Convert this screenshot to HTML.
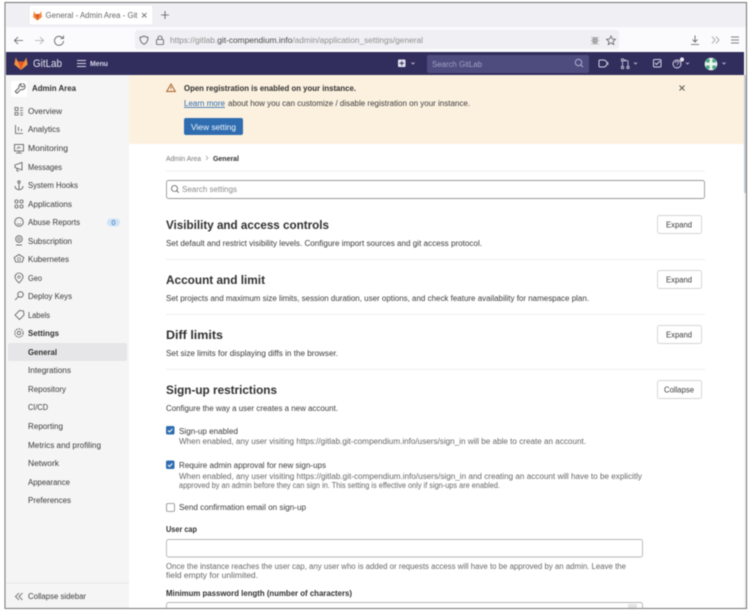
<!DOCTYPE html>
<html><head><meta charset="utf-8"><style>
html,body{margin:0;padding:0;background:#fff;width:755px;height:614px;overflow:hidden}
svg{display:block;filter:blur(.55px)}
text{font-family:"Liberation Sans",sans-serif;font-size:8px;fill:#404040}
.s{fill:#3a3a3a}
.g{fill:#666}
.b{font-weight:bold;fill:#303030}
.h{font-weight:bold;font-size:12px;fill:#303030}
.i{fill:none;stroke:#5c5c5c;stroke-width:.85}
.w{fill:none;stroke:#d5d4e6;stroke-width:1}
</style></head><body>
<svg width="755" height="614" viewBox="0 0 755 614" xmlns="http://www.w3.org/2000/svg">
<rect width="755" height="614" fill="#fff"/>
<!-- browser chrome -->
<rect x="6" y="3" width="740" height="24" fill="#f0f0f4"/>
<rect x="29" y="5" width="124" height="20" rx="2" fill="#fff" stroke="#e2e2e6" stroke-width=".6"/>
<path d="M37.500 20.500L33 17L34 11L35.400 14H39.600L41 11L42 17Z" fill="#ee8a3c"/><path d="M37.500 20.500L35.400 14H39.600Z" fill="#e2552a"/>
<text x="45.500" y="18" textLength="92" lengthAdjust="spacingAndGlyphs" class="g">General - Admin Area - Git</text>
<path d="M142 13l4.500 4.500M146.500 13L142 17.500" class="i"/>
<path d="M165 11v8M161 15h8" class="i"/>
<rect x="6" y="27" width="740" height="25" fill="#fbfbfd"/>
<rect x="135" y="30" width="484" height="19" rx="3" fill="#f0f0f4"/>
<path d="M23 40.500H14.500M18 37l-3.500 3.500 3.500 3.500" class="i"/>
<path d="M35 40.500h8.500M40 37l3.500 3.500-3.500 3.500" class="i" style="stroke:#aaa"/>
<path d="M62.500 38a4.500 4.500 0 1 0 1 3M63.500 35.500V38.500H60.500" class="i"/>
<path d="M144 36c1.500 1 3 1.300 4 1.300 0 3.500-1 5.700-4 7-3-1.300-4-3.500-4-7 1 0 2.500-.3 4-1.300z" class="i"/>
<rect x="156.500" y="39.500" width="7" height="5" rx=".8" class="i"/><path d="M158 39.500v-1.500a2 2 0 0 1 4 0v1.500" class="i"/>
<text x="170" y="43" textLength="253" lengthAdjust="spacingAndGlyphs" style="fill:#8f8f8f">https://gitlab.<tspan style="fill:#4a4a4a">git-compendium.info</tspan>/admin/application_settings/general</text>
<ellipse cx="595" cy="40.500" rx="3" ry="3.500" fill="#a4a4a4"/><path d="M591 37.500l8 0M590.500 40.500h9M591 44l8 0" stroke="#b4b4b4" stroke-width=".7"/>
<path d="M611 36l1.300 2.900 3.100.4-2.300 2.100.6 3.100-2.700-1.600-2.700 1.600.6-3.100-2.300-2.100 3.100-.4z" class="i" style="stroke:#666"/>
<path d="M695 35.500v6M692.500 39.500l2.500 2.500 2.500-2.500M691 44.500h8" class="i"/>
<path d="M712 36.500l3 3.500-3 3.500M716 36.500l3 3.500-3 3.500" class="i" style="stroke:#999"/>
<path d="M731 37h8M731 40h8M731 43h8" class="i"/>
<!-- nav -->
<rect x="6" y="52" width="738" height="23" fill="#312e5d"/>
<path d="M21 70L14.300 64.500L15.700 57.500L17.700 61.500H24.300L26.300 57.500L27.700 64.500Z" fill="#f0933f"/><path d="M21 70L17.700 61.500H24.300Z" fill="#e5572b"/>
<text x="33" y="67" textLength="29" lengthAdjust="spacingAndGlyphs" style="font-size:11px;fill:#e6e5f0">GitLab</text>
<path d="M77 60.500h9M77 63.500h9M77 66.500h9" class="w"/>
<text x="90" y="66" textLength="18" lengthAdjust="spacingAndGlyphs" style="font-size:7px;font-weight:bold;fill:#d8d7e8">Menu</text>
<rect x="398" y="59.500" width="7.500" height="7.500" rx="1" fill="#e4e3f0"/><path d="M401.800 61v4.500M399.500 63.300h4.500" stroke="#312e5d"/>
<path d="M411.500 62.500l1.500 1.500 1.500-1.500" class="w" style="stroke-width:.8"/>
<rect x="427" y="55" width="162" height="18" rx="2" fill="#4e4b7e"/>
<text x="432" y="67" textLength="50" lengthAdjust="spacingAndGlyphs" style="fill:#a3a1c4">Search GitLab</text>
<circle cx="578.500" cy="62.500" r="3.200" fill="none" stroke="#b0aecd"/><path d="M581 65l2 2" stroke="#b0aecd"/>
<path d="M600 60h3.500a3.500 3.500 0 0 1 0 7H600a1 1 0 0 1-1-1v-5a1 1 0 0 1 1-1z" class="w"/><path d="M608 62v3" class="w" style="stroke-width:.7"/>
<circle cx="622.500" cy="60" r="1.200" class="w" style="stroke-width:.8"/><circle cx="622.500" cy="67.500" r="1.200" class="w" style="stroke-width:.8"/><path d="M622.500 61.200v5M625.500 59.500l-1 1 1 1M624.500 60.500H627a1 1 0 0 1 1 1v5" class="w" style="stroke-width:.8"/><circle cx="628" cy="67.500" r="1.200" class="w" style="stroke-width:.8"/>
<path d="M634 62.500l1.500 1.500 1.500-1.500" class="w" style="stroke-width:.8"/>
<rect x="653.500" y="59.500" width="7.500" height="7.500" rx="1" class="w"/><path d="M655 63l1.500 1.500 3.500-3.500" class="w"/>
<circle cx="677" cy="64" r="4" class="w"/><path d="M675.500 63c0-2 3-2 3 0 0 1-1.500 1-1.500 2M677 66.300v.5" class="w" style="stroke-width:.7"/>
<circle cx="682" cy="59.500" r="2.100" fill="#e8e8f4"/><path d="M686 62.500l1.500 1.500 1.500-1.500" class="w" style="stroke-width:.8"/>
<circle cx="711" cy="64" r="6.300" fill="#e6f2e6"/><circle cx="707.800" cy="60.800" r="2" fill="#4fa888"/><circle cx="714.200" cy="60.800" r="2" fill="#4fa888"/><circle cx="707.800" cy="67.200" r="2" fill="#4fa888"/><circle cx="714.200" cy="67.200" r="2" fill="#4fa888"/><path d="M711 58v12M705 64h12" stroke="#eef6ee" stroke-width="1.500"/>
<path d="M722.500 62.500l1.500 1.500 1.500-1.500" class="w" style="stroke-width:.8"/>
<!-- sidebar -->
<rect x="6" y="75" width="123" height="533" fill="#f5f5f5"/>
<rect x="11" y="81" width="16" height="16" rx="2" fill="#fff"/>
<path d="M22.500 83.500a3.200 3.200 0 0 1 2.500 4 3.200 3.200 0 0 1-4.200 2L17 93.300l-1.800-1.800 3.800-3.800a3.200 3.200 0 0 1 2-4l-.2 2.300 1.500 1 1.700-1" class="i" style="stroke:#444"/>
<text x="32" y="91" textLength="44" lengthAdjust="spacingAndGlyphs" class="b">Admin Area</text>
<path d="M15 107.500h3v3h-3zM15 112.500h3v2.500h-3zM20 108h3M20 110.500h3M20 113h3M20 115h3" class="i" style="stroke-width:.8"/>
<text x="28" y="114" textLength="34" lengthAdjust="spacingAndGlyphs" class="s">Overview</text>
<path d="M15.500 125v8M15 133.500h8M18.500 127v4M21.500 129v2" class="i"/>
<text x="28" y="132" textLength="32" lengthAdjust="spacingAndGlyphs" class="s">Analytics</text>
<rect x="14.500" y="144.500" width="9" height="6.500" class="i"/><path d="M19 151v2M16 153h6M17 149l1.500-2 2 1" class="i" style="stroke-width:.7"/>
<text x="28" y="151" textLength="40" lengthAdjust="spacingAndGlyphs" class="s">Monitoring</text>
<path d="M15 165l7-2.500v7.500l-7-2.500zM17 168v3h2" class="i"/>
<text x="28" y="170" textLength="34" lengthAdjust="spacingAndGlyphs" class="s">Messages</text>
<circle cx="19" cy="182" r="1.200" class="i"/><path d="M19 183v7M15 186c0 5 8 5 8 0" class="i"/>
<text x="28" y="188" textLength="50" lengthAdjust="spacingAndGlyphs" class="s">System Hooks</text>
<rect x="15" y="200" width="3" height="3" rx="1.200" class="i"/><rect x="20" y="200" width="3" height="3" rx="1.200" class="i"/><rect x="15" y="205" width="3" height="3" rx="1.200" class="i"/><rect x="20" y="205" width="3" height="3" rx="1.200" class="i"/>
<text x="28" y="207" textLength="44" lengthAdjust="spacingAndGlyphs" class="s">Applications</text>
<circle cx="19" cy="222" r="4.300" class="i"/><path d="M17 223.500c1 1 3 1 4 0M17 221h.5M20.500 221h.5" class="i" style="stroke-width:.7"/>
<text x="28" y="225" textLength="52" lengthAdjust="spacingAndGlyphs" class="s">Abuse Reports</text>
<rect x="107" y="218.500" width="13" height="8" rx="4" fill="#cfe3f6"/>
<text x="111.500" y="225" textLength="4" lengthAdjust="spacingAndGlyphs" style="font-size:7px;fill:#2f6fb5">0</text>
<circle cx="19" cy="239" r="3.300" class="i"/><circle cx="19" cy="239" r="1.300" class="i" style="stroke-width:.6"/><path d="M16 245h6" class="i"/>
<text x="28" y="244" textLength="44" lengthAdjust="spacingAndGlyphs" class="s">Subscription</text>
<path d="M19 254.500l4.800 3-1.500 4.500h-6.600l-1.500-4.500z" class="i"/><circle cx="19" cy="259" r="1.500" class="i" style="stroke-width:.6"/>
<text x="28" y="262" textLength="41" lengthAdjust="spacingAndGlyphs" class="s">Kubernetes</text>
<path d="M19 283c-3-3-4-4.500-4-6a4 4 0 0 1 8 0c0 1.500-1 3-4 6z" class="i"/><circle cx="19" cy="277" r="1.200" class="i" style="stroke-width:.6"/>
<text x="28" y="281" textLength="14" lengthAdjust="spacingAndGlyphs" class="s">Geo</text>
<circle cx="20.500" cy="294.500" r="2.800" class="i"/><path d="M18.500 296.500l-3.500 3.500" class="i"/>
<text x="28" y="299" textLength="44" lengthAdjust="spacingAndGlyphs" class="s">Deploy Keys</text>
<path d="M15 315l4.500-4.500 4 .5.5 4-4.500 4.500z" class="i"/>
<text x="28" y="318" textLength="22" lengthAdjust="spacingAndGlyphs" class="s">Labels</text>
<circle cx="19" cy="333" r="1.700" class="i"/><circle cx="19" cy="333" r="4.200" class="i" stroke-dasharray="2 .7"/>
<text x="28" y="336" textLength="31" lengthAdjust="spacingAndGlyphs" class="b">Settings</text>
<rect x="8" y="343" width="119" height="18" rx="2" fill="#e6e6e8"/>
<text x="28" y="355" textLength="29" lengthAdjust="spacingAndGlyphs" class="b">General</text>
<text x="28" y="373" textLength="43" lengthAdjust="spacingAndGlyphs" class="s">Integrations</text>
<text x="28" y="392" textLength="38" lengthAdjust="spacingAndGlyphs" class="s">Repository</text>
<text x="28" y="410" textLength="20" lengthAdjust="spacingAndGlyphs" class="s">CI/CD</text>
<text x="28" y="429" textLength="35" lengthAdjust="spacingAndGlyphs" class="s">Reporting</text>
<text x="28" y="448" textLength="73" lengthAdjust="spacingAndGlyphs" class="s">Metrics and profiling</text>
<text x="28" y="466" textLength="31" lengthAdjust="spacingAndGlyphs" class="s">Network</text>
<text x="28" y="485" textLength="42" lengthAdjust="spacingAndGlyphs" class="s">Appearance</text>
<text x="28" y="503" textLength="43" lengthAdjust="spacingAndGlyphs" class="s">Preferences</text>
<rect x="6" y="582.500" width="123" height=".8" fill="#e2e2e2"/>
<path d="M19 593l-3.500 3.500 3.500 3.500M22.500 593l-3.500 3.500 3.500 3.500" class="i"/>
<text x="28" y="599" textLength="58" lengthAdjust="spacingAndGlyphs" class="s">Collapse sidebar</text>
<!-- banner -->
<rect x="129" y="75" width="615" height="69" fill="#fcf1df"/>
<path d="M171 84l4.300 7.500h-8.600z" fill="none" stroke="#a9602a" stroke-width="1"/><path d="M171 86.500v2.500M171 90v.5" stroke="#a9602a" stroke-width=".8"/>
<text x="184" y="91" textLength="172" lengthAdjust="spacingAndGlyphs" class="b">Open registration is enabled on your instance.</text>
<text x="184" y="106" textLength="41" lengthAdjust="spacingAndGlyphs" style="fill:#2a6ab0;text-decoration:underline">Learn more</text>
<text x="228" y="106" textLength="242" lengthAdjust="spacingAndGlyphs" class="s">about how you can customize / disable registration on your instance.</text>
<rect x="184" y="118" width="59" height="17" rx="2" fill="#2f6db0"/>
<text x="191" y="130" textLength="45" lengthAdjust="spacingAndGlyphs" style="fill:#f0f5fb">View setting</text>
<path d="M679.500 85.500l5 5M684.500 85.500l-5 5" stroke="#555" stroke-width=".9"/>
<!-- main -->
<text x="166" y="161" textLength="35" lengthAdjust="spacingAndGlyphs" style="font-size:7px;fill:#777">Admin Area</text>
<path d="M206 156l2 2-2 2" fill="none" stroke="#999" stroke-width=".7"/>
<text x="213" y="161" textLength="26" lengthAdjust="spacingAndGlyphs" class="b" style="font-size:7px">General</text>
<rect x="166" y="170.500" width="539" height=".8" fill="#eaeaea"/>
<rect x="166.500" y="180.500" width="538" height="18" rx="2" fill="#fff" stroke="#9a9a9a" stroke-width=".9"/>
<circle cx="174.500" cy="188.500" r="3" class="i"/><path d="M176.700 190.700l2 2" class="i"/>
<text x="182" y="192" textLength="55" lengthAdjust="spacingAndGlyphs" style="fill:#8a8a8a">Search settings</text>

<text x="166" y="229" textLength="163" lengthAdjust="spacingAndGlyphs" class="h">Visibility and access controls</text>
<text x="166" y="246" textLength="316" lengthAdjust="spacingAndGlyphs" class="s">Set default and restrict visibility levels. Configure import sources and git access protocol.</text>
<rect x="657.500" y="215.500" width="44" height="18" rx="2" fill="#fff" stroke="#d4d4d4" stroke-width=".9"/>
<text x="666" y="227.500" textLength="26" lengthAdjust="spacingAndGlyphs" class="s">Expand</text>
<rect x="166" y="259" width="539" height=".8" fill="#eaeaea"/>

<text x="166" y="284" textLength="99" lengthAdjust="spacingAndGlyphs" class="h">Account and limit</text>
<text x="166" y="301" textLength="423" lengthAdjust="spacingAndGlyphs" class="s">Set projects and maximum size limits, session duration, user options, and check feature availability for namespace plan.</text>
<rect x="657.500" y="270.500" width="44" height="18" rx="2" fill="#fff" stroke="#d4d4d4" stroke-width=".9"/>
<text x="666" y="282.500" textLength="26" lengthAdjust="spacingAndGlyphs" class="s">Expand</text>
<rect x="166" y="314" width="539" height=".8" fill="#eaeaea"/>

<text x="166" y="339" textLength="57" lengthAdjust="spacingAndGlyphs" class="h">Diff limits</text>
<text x="166" y="356" textLength="172" lengthAdjust="spacingAndGlyphs" class="s">Set size limits for displaying diffs in the browser.</text>
<rect x="657.500" y="325.500" width="44" height="18" rx="2" fill="#fff" stroke="#d4d4d4" stroke-width=".9"/>
<text x="666" y="337.500" textLength="26" lengthAdjust="spacingAndGlyphs" class="s">Expand</text>
<rect x="166" y="369" width="539" height=".8" fill="#eaeaea"/>

<text x="166" y="394" textLength="111" lengthAdjust="spacingAndGlyphs" class="h">Sign-up restrictions</text>
<text x="166" y="411" textLength="172" lengthAdjust="spacingAndGlyphs" class="s">Configure the way a user creates a new account.</text>
<rect x="657.500" y="380.500" width="44" height="18" rx="2" fill="#fff" stroke="#d4d4d4" stroke-width=".9"/>
<text x="664" y="392.500" textLength="30" lengthAdjust="spacingAndGlyphs" class="s">Collapse</text>

<rect x="166" y="426" width="8.500" height="8.500" rx="1.500" fill="#2f6db0"/><path d="M168 430.500l1.500 1.500 2.800-3" fill="none" stroke="#fff" stroke-width="1"/>
<text x="179" y="434" textLength="59" lengthAdjust="spacingAndGlyphs" class="s">Sign-up enabled</text>
<text x="179" y="444" textLength="407" lengthAdjust="spacingAndGlyphs" class="g">When enabled, any user visiting https://gitlab.git-compendium.info/users/sign_in will be able to create an account.</text>
<rect x="166" y="460.500" width="8.500" height="8.500" rx="1.500" fill="#2f6db0"/><path d="M168 465l1.500 1.500 2.800-3" fill="none" stroke="#fff" stroke-width="1"/>
<text x="179" y="468" textLength="147" lengthAdjust="spacingAndGlyphs" class="s">Require admin approval for new sign-ups</text>
<text x="179" y="479" textLength="463" lengthAdjust="spacingAndGlyphs" class="g">When enabled, any user visiting https://gitlab.git-compendium.info/users/sign_in and creating an account will have to be explicitly</text>
<text x="179" y="488" textLength="321" lengthAdjust="spacingAndGlyphs" class="g">approved by an admin before they can sign in. This setting is effective only if sign-ups are enabled.</text>
<rect x="166.500" y="503.500" width="8" height="8" rx="1.500" fill="#fff" stroke="#888" stroke-width=".8"/>
<text x="179" y="510" textLength="127" lengthAdjust="spacingAndGlyphs" class="s">Send confirmation email on sign-up</text>
<text x="166" y="532" textLength="31" lengthAdjust="spacingAndGlyphs" class="b">User cap</text>
<rect x="166.500" y="539.500" width="476" height="17.500" rx="2" fill="#fff" stroke="#b5b5b5" stroke-width=".9"/>
<text x="166" y="569" textLength="460" lengthAdjust="spacingAndGlyphs" class="g">Once the instance reaches the user cap, any user who is added or requests access will have to be approved by an admin. Leave the</text>
<text x="166" y="578" textLength="92" lengthAdjust="spacingAndGlyphs" class="g">field empty for unlimited.</text>
<text x="166" y="596" textLength="186" lengthAdjust="spacingAndGlyphs" class="b">Minimum password length (number of characters)</text>
<rect x="166.500" y="602.500" width="476" height="12" rx="2" fill="#fff" stroke="#b5b5b5" stroke-width=".9"/>
<rect x="628" y="604" width="9" height="5" fill="#e4e4e4"/>
<!-- scrollbar & frame -->
<rect x="744" y="75" width="2" height="533" fill="#f4f4f4"/>
<rect x="744" y="75" width="2.500" height="118" fill="#c6ccd4"/>
<rect x="5" y="2.500" width="741.500" height="606" fill="none" stroke="#7c7c7c" stroke-width="1.100"/>
<rect x="0" y="609" width="755" height="5" fill="#fff"/>
</svg>
</body></html>
